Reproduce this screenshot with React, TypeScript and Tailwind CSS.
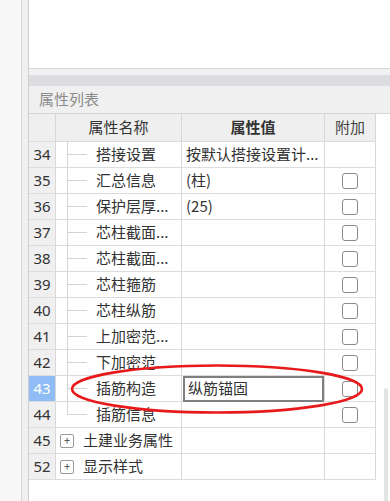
import React from "react";

type Row = {
  n: string;
  name: string;
  value?: string;
  check?: boolean;
  kind?: "leaf" | "lastLeaf" | "group";
  selected?: boolean;
  editing?: boolean;
};

const rows: Row[] = [
  { n: "34", name: "搭接设置", value: "按默认搭接设置计...", kind: "leaf" },
  { n: "35", name: "汇总信息", value: "(柱)", check: true, kind: "leaf" },
  { n: "36", name: "保护层厚...", value: "(25)", check: true, kind: "leaf" },
  { n: "37", name: "芯柱截面...", check: true, kind: "leaf" },
  { n: "38", name: "芯柱截面...", check: true, kind: "leaf" },
  { n: "39", name: "芯柱箍筋", check: true, kind: "leaf" },
  { n: "40", name: "芯柱纵筋", check: true, kind: "leaf" },
  { n: "41", name: "上加密范...", check: true, kind: "leaf" },
  { n: "42", name: "下加密范...", check: true, kind: "leaf" },
  { n: "43", name: "插筋构造", value: "纵筋锚固", check: true, kind: "leaf", selected: true, editing: true },
  { n: "44", name: "插筋信息", check: true, kind: "lastLeaf" },
  { n: "45", name: "土建业务属性", kind: "group" },
  { n: "52", name: "显示样式", kind: "group" },
];

const font = { fontFamily: '"Noto Sans CJK SC", "Noto Sans", sans-serif' };

export default function App() {
  return (
    <div
      className="relative flex h-[501px] w-[390px] overflow-hidden bg-[#f7f7f7] text-[#333]"
      style={font}
    >
      <div className="w-[22px] shrink-0 border-r border-[#d8d8d8] bg-[#f7f7f7]" />
      <div className="w-[7px] shrink-0 border-r border-[#cfcfcf] bg-[#f0f0f0]" />
      <div className="flex flex-1 flex-col bg-white">
        <div className="h-[69px] shrink-0 border-b border-[#d6d6d6] bg-white" />
        <div className="h-[6px] shrink-0 bg-[#f1f1f1]" />
        <div className="h-[11px] shrink-0 bg-[#dcdde0]" />
        <div className="flex h-[28px] shrink-0 items-center border-b border-[#d6d6d6] bg-[#f0f0f0] pl-[10px] text-[15px] text-[#8c8c8c]">
          属性列表
        </div>
        <div className="w-[347px]">
          {/* header */}
          <div className="flex h-[28px] border-b border-[#dcdcdc] bg-[#efefef] text-[15px]">
            <div className="w-[27px] shrink-0 border-r border-[#d8d8d8]" />
            <div className="flex w-[126px] shrink-0 items-center justify-center border-r border-[#d8d8d8] text-[#333]">
              属性名称
            </div>
            <div className="flex w-[143px] shrink-0 items-center justify-center border-r border-[#d8d8d8] font-bold text-[#333]">
              属性值
            </div>
            <div className="flex w-[51px] shrink-0 items-center justify-center border-r border-[#d8d8d8] text-[#444]">
              附加
            </div>
          </div>
          {rows.map((r) => (
            <div key={r.n} className="flex h-[26px] border-b border-[#dcdcdc] text-[15px]">
              <div
                className={
                  r.selected
                    ? "flex w-[27px] shrink-0 items-center justify-center border-r border-[#d8d8d8] bg-[#8fbcf5] text-white"
                    : "flex w-[27px] shrink-0 items-center justify-center border-r border-[#d8d8d8] bg-[#f0f0f0] text-[#333]"
                }
                style={{ fontFamily: '"Noto Sans", sans-serif' }}
              >
                {r.n}
              </div>
              <div className="relative flex w-[126px] shrink-0 items-center border-r border-[#d8d8d8]">
                {r.kind === "group" ? (
                  <>
                    <span className="ml-[4px] flex h-[14px] w-[14px] items-center justify-center rounded-[2px] border border-[#9a9a9a] text-[11px] leading-none text-[#444]">
                      +
                    </span>
                    <span className="ml-[9px] whitespace-nowrap">{r.name}</span>
                  </>
                ) : (
                  <>
                    <span
                      className={
                        r.kind === "lastLeaf"
                          ? "absolute left-[11px] top-0 h-[13px] w-px bg-[#d4d4d4]"
                          : "absolute left-[11px] top-[-1px] bottom-[-1px] w-px bg-[#d4d4d4]"
                      }
                    />
                    <span className="absolute left-[11px] top-[12px] h-px w-[20px] bg-[#d4d4d4]" />
                    <span className="ml-[40px] whitespace-nowrap">{r.name}</span>
                  </>
                )}
              </div>
              <div className="flex w-[143px] shrink-0 items-center border-r border-[#d8d8d8]">
                {r.editing ? (
                  <div className="ml-px flex h-[26px] w-[142px] items-center border-2 border-[#7f7f7f] pl-[3px] text-[#333]">
                    {r.value}
                  </div>
                ) : (
                  <span className="whitespace-nowrap pl-[4px]">{r.value}</span>
                )}
              </div>
              <div className="flex w-[51px] shrink-0 items-center justify-center border-r border-[#d8d8d8]">
                {r.check && (
                  <span className="h-[16px] w-[16px] rounded-[3px] border-[1.5px] border-[#8a8a8a] bg-white" />
                )}
              </div>
            </div>
          ))}
        </div>
      </div>
      {/* scrollbar */}
      <div className="absolute left-[384px] top-[388px] h-[120px] w-[4px] rounded-sm bg-[#e4e4e4]" />
      {/* red ellipse annotation */}
      <svg className="pointer-events-none absolute left-0 top-0" width="390" height="501">
        <ellipse cx="217" cy="389" rx="145" ry="23.5" fill="none" stroke="#e8191a" strokeWidth="2.6" />
      </svg>
    </div>
  );
}
